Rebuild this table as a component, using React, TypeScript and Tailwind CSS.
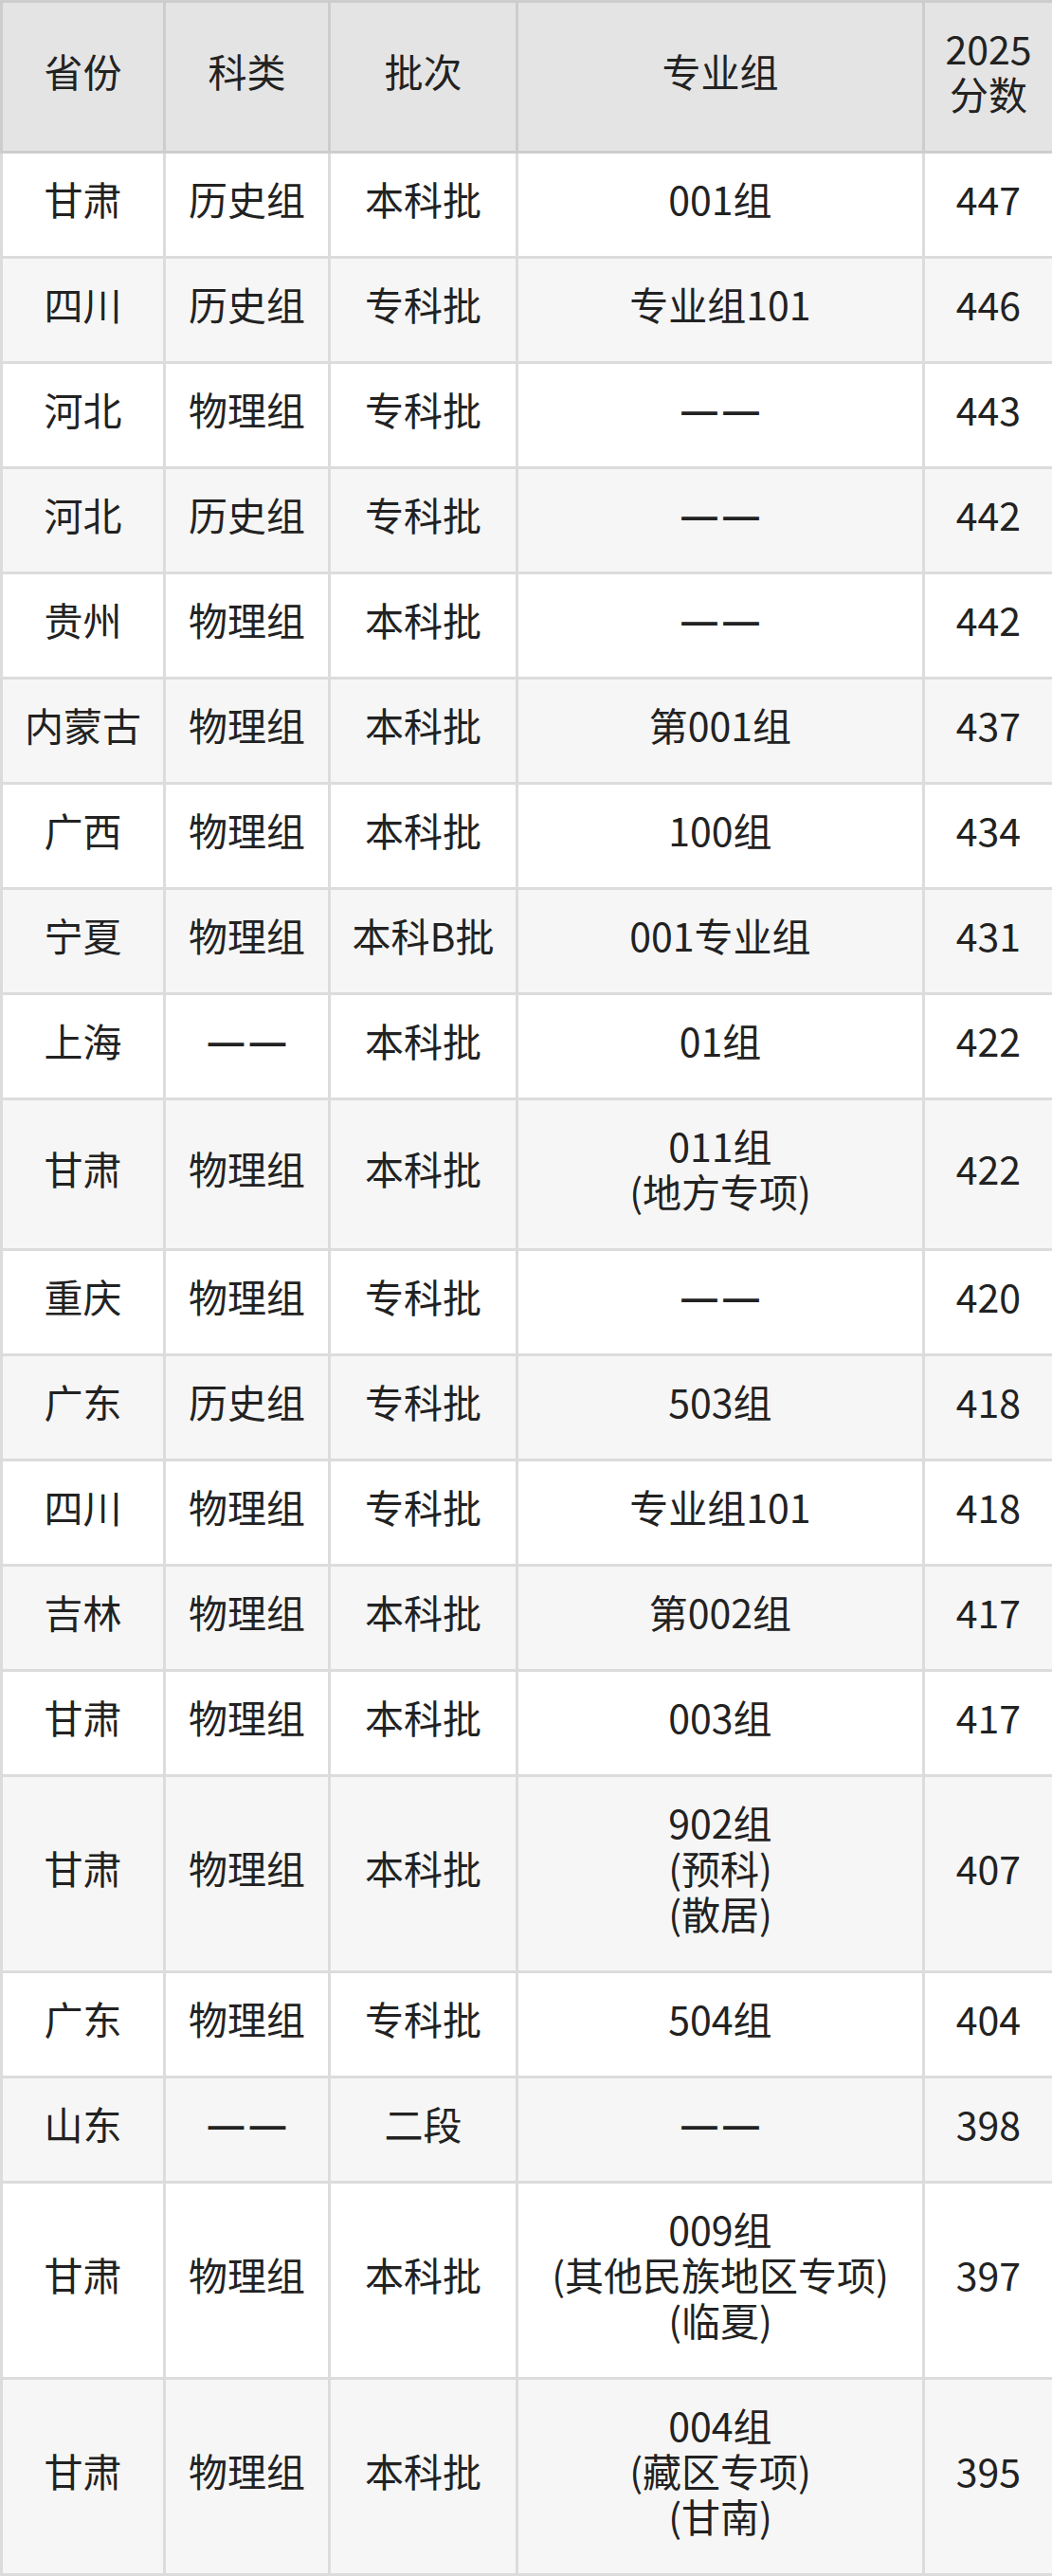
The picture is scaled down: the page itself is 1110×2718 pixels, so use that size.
import React from "react";

const rows: [string, string, string, string[], string][] = [
  ["甘肃", "历史组", "本科批", ["001组"], "447"],
  ["四川", "历史组", "专科批", ["专业组101"], "446"],
  ["河北", "物理组", "专科批", ["——"], "443"],
  ["河北", "历史组", "专科批", ["——"], "442"],
  ["贵州", "物理组", "本科批", ["——"], "442"],
  ["内蒙古", "物理组", "本科批", ["第001组"], "437"],
  ["广西", "物理组", "本科批", ["100组"], "434"],
  ["宁夏", "物理组", "本科B批", ["001专业组"], "431"],
  ["上海", "——", "本科批", ["01组"], "422"],
  ["甘肃", "物理组", "本科批", ["011组", "(地方专项)"], "422"],
  ["重庆", "物理组", "专科批", ["——"], "420"],
  ["广东", "历史组", "专科批", ["503组"], "418"],
  ["四川", "物理组", "专科批", ["专业组101"], "418"],
  ["吉林", "物理组", "本科批", ["第002组"], "417"],
  ["甘肃", "物理组", "本科批", ["003组"], "417"],
  ["甘肃", "物理组", "本科批", ["902组", "(预科)", "(散居)"], "407"],
  ["广东", "物理组", "专科批", ["504组"], "404"],
  ["山东", "——", "二段", ["——"], "398"],
  ["甘肃", "物理组", "本科批", ["009组", "(其他民族地区专项)", "(临夏)"], "397"],
  ["甘肃", "物理组", "本科批", ["004组", "(藏区专项)", "(甘南)"], "395"],
];

const th =
  "border-[3px] border-[#cdcdcd] bg-[#e4e4e4] pt-[23px] pb-[37px] px-0 text-center align-middle font-normal";
const td = "border-[3px] border-[#dcdcdc] pt-[23px] pb-[37px] px-0 text-center align-middle";

function Txt({ t }: { t: string }) {
  if (t === "——") {
    return (
      <span
        className="inline-block h-[48px] align-top leading-[48px] tracking-[3px] mr-[-3px] font-medium"
        style={{ fontFamily: '"Noto Sans", "Noto Sans CJK SC", sans-serif' }}
      >
        ——
      </span>
    );
  }
  return <>{t}</>;
}

export default function App() {
  return (
    <div className="w-[1110px] bg-white">
      <table
        className="w-[1110px] table-fixed border-collapse text-[41px] leading-[48px] text-[#222222]"
        style={{ fontFamily: '"Noto Sans CJK SC", "Noto Sans", sans-serif' }}
      >
        <colgroup>
          <col className="w-[172px]" />
          <col className="w-[174px]" />
          <col className="w-[198px]" />
          <col className="w-[429px]" />
          <col className="w-[137px]" />
        </colgroup>
        <thead>
          <tr>
            <th className={th}>省份</th>
            <th className={th}>科类</th>
            <th className={th}>批次</th>
            <th className={th}>专业组</th>
            <th className={th}>
              <div>2025</div>
              <div>分数</div>
            </th>
          </tr>
        </thead>
        <tbody>
          {rows.map((r, i) => (
            <tr key={i} className={i % 2 === 0 ? "bg-white" : "bg-[#f6f6f6]"}>
              <td className={td}>{r[0]}</td>
              <td className={td}>
                <Txt t={r[1]} />
              </td>
              <td className={td}>{r[2]}</td>
              <td className={td}>
                {r[3].map((l, j) => (
                  <div key={j}>
                    <Txt t={l} />
                  </div>
                ))}
              </td>
              <td className={td}>{r[4]}</td>
            </tr>
          ))}
        </tbody>
      </table>
    </div>
  );
}
